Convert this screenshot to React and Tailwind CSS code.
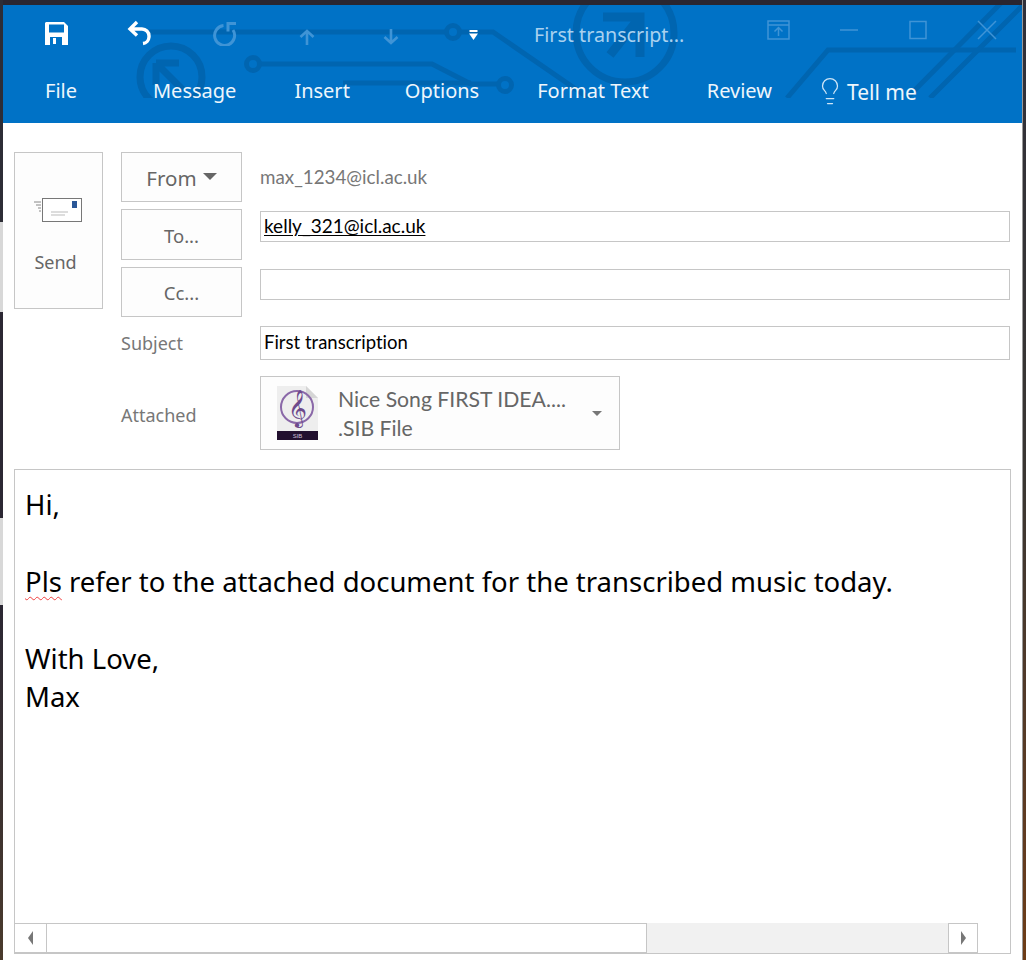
import React from 'react';
import { Lightbulb } from 'lucide-react';

const ribbonTabs = [
    { label: 'Message', className: '' },
    { label: 'Insert', className: '-mr-[3px]' },
    { label: 'Options', className: '' },
    { label: 'Format Text', className: '' },
    { label: 'Review', className: '' },
];

function CircuitPattern() {
    return (
        <svg className="absolute left-0 top-0 h-[93px] w-[1020px]" viewBox="0 0 1020 93" fill="none" stroke="#0065b0" strokeWidth="5">
            <path d="M145 27H443M458 27H490L590 96" />
            <circle cx="450" cy="27" r="6.5" />
            <path d="M257 59H429L468 79H495" />
            <circle cx="250" cy="59" r="6.5" />
            <circle cx="502" cy="80" r="6.5" />
            <path d="M340 78H468" />
            <circle cx="168" cy="72" r="31" strokeWidth="7" />
            <path d="M153 58H176M153 58V80M153 58L180 85" strokeWidth="7" />
            <circle cx="622" cy="28" r="49" strokeWidth="7" />
            <path d="M600 12H637V52M637 12L607 50" strokeWidth="9" />
            <path d="M784 93L825 45H1013" />
            <path d="M904 93L1000 -4M927 93L1024 -4" />
        </svg>
    );
}

function SaveIcon() {
    return (
        <svg className="h-[23px] w-[23px]" viewBox="0 0 23 23" fill="#fff">
            <path d="M1 0H19L23 4V23H0V1Z" />
            <rect x="4" y="2.5" width="15" height="8" fill="#0072c6" />
            <rect x="5" y="15" width="12" height="8" fill="#0072c6" />
            <rect x="8" y="16" width="3" height="6" fill="#fff" />
        </svg>
    );
}

function QuickAccessBar() {
    return (
        <div className="relative flex h-[60px] items-center text-white">
            <div className="ml-[42px] flex w-[82px] items-center -mt-[4px]">
                <SaveIcon />
            </div>
            <svg className="h-[26px] w-[26px] -mt-[5px]" viewBox="0 0 26 26" fill="none" stroke="#fff" strokeWidth="3.4">
                <path d="M10 2L3 9L10 15.5M3 9H15a7 7 0 0 1 7 7v1a7 7 0 0 1-6 6.5" />
            </svg>
            <svg className="ml-[60px] h-[24px] w-[24px] -mt-[2px]" viewBox="0 0 24 24" fill="none" stroke="#3f94d6" strokeWidth="3">
                <path d="M10.5 3.5A10 10 0 1 0 20 8M15 9.5V1.5H23" />
            </svg>
            <svg className="ml-[62px] h-[16px] w-[16px] mt-[4px]" viewBox="0 0 16 16" fill="none" stroke="#3f94d6" strokeWidth="2.6">
                <path d="M8 16V2M1.5 8L8 2L14.5 8" />
            </svg>
            <svg className="ml-[68px] h-[16px] w-[16px] mt-[4px]" viewBox="0 0 16 16" fill="none" stroke="#3f94d6" strokeWidth="2.6">
                <path d="M8 0V14M1.5 8L8 14L14.5 8" />
            </svg>
            <svg className="ml-[70px] h-[10px] w-[9px] -mt-[1px]" viewBox="0 0 9 10" fill="#fff">
                <rect x="0.5" y="0" width="8" height="2" />
                <path d="M0 3.5H9L4.5 10Z" />
            </svg>
            <span className="ml-[56px] text-[19.7px] -mt-[1px] text-[#a9d1ef]">First transcript...</span>
            <svg className="ml-[83px] h-[20px] w-[23px] -mt-[10px]" viewBox="0 0 23 20" fill="none" stroke="#3f94d6" strokeWidth="1.5">
                <path d="M1 1H22V19H1ZM1 5H22M11.5 16V8M7.5 11.5L11.5 7.5L15.5 11.5" />
            </svg>
            <svg className="ml-[49px] h-[20px] w-[20px] -mt-[10px]" viewBox="0 0 20 20" stroke="#3f94d6" strokeWidth="1.5">
                <path d="M1 10H19" />
            </svg>
            <svg className="ml-[49px] h-[20px] w-[20px] -mt-[10px]" viewBox="0 0 20 20" fill="none" stroke="#3f94d6" strokeWidth="1.5">
                <rect x="2" y="1.5" width="16" height="17" />
            </svg>
            <svg className="ml-[49px] h-[20px] w-[20px] -mt-[10px]" viewBox="0 0 20 20" stroke="#3f94d6" strokeWidth="1.5">
                <path d="M1 1L19 19M19 1L1 19" />
            </svg>
        </div>
    );
}

function RibbonTabs() {
    return (
        <div className="relative flex h-[58px] items-start pl-[42px] pt-[11px] text-[20px] text-[#eef6fc]">
            <div className="mr-[76px]">File</div>
            <div className="flex gap-[58px]">
                {ribbonTabs.map((tab) => (
                    <div key={tab.label} className={tab.className}>{tab.label}</div>
                ))}
            </div>
            <div className="ml-[43px] flex items-center gap-[2px] -mt-[3px] text-[21px]">
                <Lightbulb className="h-[30px] w-[30px] text-[#cfe6f7]" strokeWidth={1} />
                <span className="mt-[4px]">Tell me</span>
            </div>
        </div>
    );
}

function CommandButton({ children, className = '' }) {
    return (
        <button className={`flex items-center justify-center border border-[#c6c6c6] bg-[#fdfdfd] text-[#666] ${className}`}>
            {children}
        </button>
    );
}

function SendIcon() {
    return (
        <svg className="-ml-[2px] h-[26px] w-[48px]" viewBox="0 0 48 26" fill="none">
            <rect x="8.5" y="1.5" width="39" height="23" fill="#fff" stroke="#777" />
            <rect x="38" y="4" width="5" height="7" fill="#2b5797" />
            <path d="M17 15H34M17 18H31" stroke="#bbb" />
            <path d="M0 5H7M2 8H7M4 11H7M5 14H7" stroke="#888" />
        </svg>
    );
}

function AddressField({ children, className = '' }) {
    return (
        <div className={`flex items-center border border-[#c6c6c6] bg-white pl-[3px] font-[Lato,sans-serif] text-black [font-variant-ligatures:none] ${className}`}>
            {children}
        </div>
    );
}

function SibFileIcon() {
    return (
        <svg className="h-[54px] w-[42px]" viewBox="0 0 42 54">
            <path d="M0 0H29L41 12V45H0Z" fill="#eeeeee" />
            <path d="M29 0V12H41Z" fill="#d6d6d6" />
            <circle cx="20" cy="21" r="16" fill="none" stroke="#8a68a8" strokeWidth="2" />
            <text x="20" y="33" textAnchor="middle" fontSize="32" fontFamily="DejaVu Sans" fill="#6d4a8c">𝄞</text>
            <rect x="0" y="45" width="41" height="9" fill="#22102f" />
            <text x="20.5" y="52" textAnchor="middle" fontSize="6" fontFamily="Liberation Sans" fill="#cbbfd6">SIB</text>
        </svg>
    );
}

function ComposeForm() {
    return (
        <div className="grid grid-cols-[89px_121px_1fr] grid-rows-[50px_51px_50px_34px_85px] gap-x-[18px] gap-y-[7px] pl-[11px] pr-[12px] pt-[29px]">
            <CommandButton className="row-span-3 h-[157px] flex-col pt-[12px] text-[18px]">
                <SendIcon />
                <span className="mt-[26px] -ml-[6px]">Send</span>
            </CommandButton>
            <CommandButton className="pt-[2px] text-[20.5px]">
                From
                <span className="ml-[6px] mb-[4px] h-0 w-0 border-x-[7px] border-t-[7px] border-x-transparent border-t-[#666]" />
            </CommandButton>
            <div className="flex items-center font-[Lato,sans-serif] text-[18.8px] text-[#777]">max_1234@icl.ac.uk</div>

            <CommandButton className="col-start-2 pt-[2px] text-[18.5px]">To...</CommandButton>
            <div className="flex items-start pt-[2px]">
                <AddressField className="h-[31px] w-full text-[19px]">
                    <span className="underline underline-offset-2">kelly_321@icl.ac.uk</span>
                </AddressField>
            </div>

            <CommandButton className="col-start-2 pt-[2px] text-[18.5px]">Cc...</CommandButton>
            <div className="flex items-start pt-[2px]">
                <AddressField className="h-[31px] w-full text-[19px]" />
            </div>

            <div className="col-start-2 mt-[4px] flex items-center text-[18px] text-[#777]">Subject</div>
            <AddressField className="mt-[2px] h-[34px] text-[18.5px]">First transcription</AddressField>

            <div className="col-start-2 mt-[13px] flex h-[74px] items-center text-[18px] text-[#777]">Attached</div>
            <div className="mt-[11px] flex h-[74px] w-[360px] items-center border border-[#c6c6c6] bg-[#fdfdfd] pl-[16px]">
                <SibFileIcon />
                <div className="ml-[19px] w-[240px] pt-[2px] font-[Lato,sans-serif] text-[21.2px] leading-[29px] text-[#666]">
                    <div>Nice Song FIRST IDEA....</div>
                    <div>.SIB File</div>
                </div>
                <span className="ml-[14px] h-0 w-0 border-x-[5px] border-t-[5px] border-x-transparent border-t-[#777]" />
            </div>
        </div>
    );
}

function HorizontalScrollbar() {
    return (
        <div className="flex h-[30px] pr-[32px]">
            <div className="flex w-[32px] shrink-0 items-center justify-center border-y border-r border-[#c6c6c6]">
                <span className="h-0 w-0 border-y-[7px] border-r-[5px] border-y-transparent border-r-[#777]" />
            </div>
            <div className="w-[600px] shrink-0 border-y border-r border-[#c6c6c6] bg-white" />
            <div className="flex-1 bg-[#f1f1f1]" />
            <div className="flex w-[30px] shrink-0 items-center justify-center border border-[#c6c6c6]">
                <span className="h-0 w-0 border-y-[7px] border-l-[5px] border-y-transparent border-l-[#777]" />
            </div>
        </div>
    );
}

function MessageBody() {
    return (
        <div className="mx-[11px] mt-[19px] flex h-[485px] flex-col border border-[#c6c6c6] bg-white">
            <div className="flex-1 pl-[10px] pt-[16px] text-[27.5px] leading-[38px] text-black">
                <p>Hi,</p>
                <p className="mt-[39px]">
                    <span className="underline decoration-wavy decoration-[#f04040] decoration-1 underline-offset-4">Pls</span> refer to the attached document for the transcribed music today.
                </p>
                <p className="mt-[39px]">With Love,</p>
                <p>Max</p>
            </div>
            <HorizontalScrollbar />
        </div>
    );
}

export default function App() {
    return (
        <div className="flex h-[960px] w-[1026px] overflow-hidden bg-[#2a2630] pt-[5px] font-['Noto_Sans',sans-serif]">
            <div className="-mt-[5px] flex w-[3px] shrink-0 flex-col">
                <div className="h-[222px] bg-[#2d2d36]" />
                <div className="h-[90px] bg-[#d8d8d8]" />
                <div className="h-[206px] bg-[#2b2733]" />
                <div className="h-[87px] bg-[#d8d8d8]" />
                <div className="flex-1 bg-gradient-to-b from-[#2b2733] to-[#4a3a2c]" />
            </div>
            <div className="h-[955px] w-[1019px] shrink-0 bg-white">
                <header className="relative h-[118px] overflow-hidden bg-[#0072c6]">
                    <CircuitPattern />
                    <QuickAccessBar />
                    <RibbonTabs />
                </header>
                <ComposeForm />
                <MessageBody />
            </div>
            <div className="-mt-[5px] flex-1 border-l border-[#9a9a9a] bg-gradient-to-b from-[#30303a] via-[#3a3632] to-[#6e3c16]" />
        </div>
    );
}
